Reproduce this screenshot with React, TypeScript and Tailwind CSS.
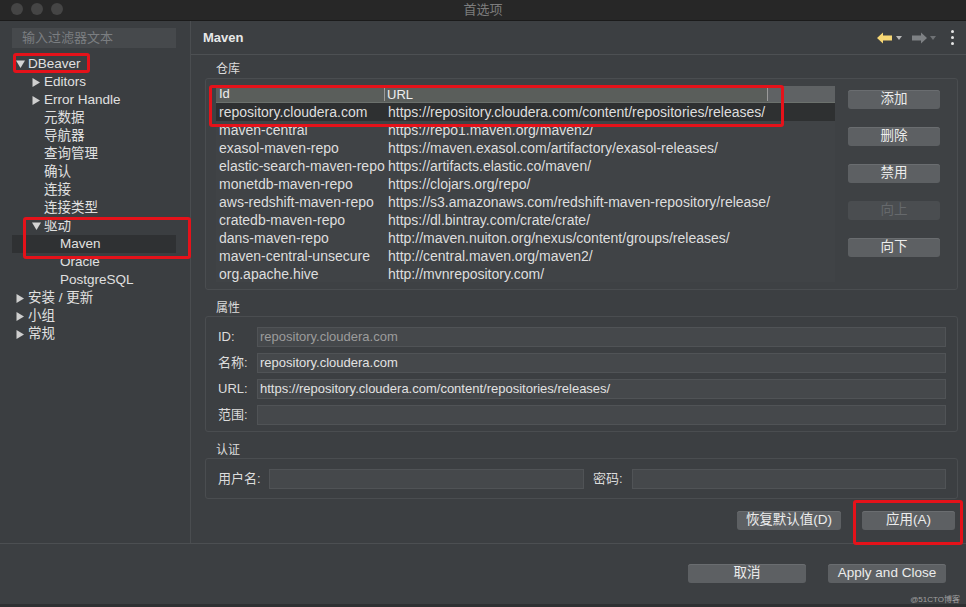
import React from "react";

type TreeNode = {
  label: string;
  level: number;
  arrow?: "open" | "closed";
  selected?: boolean;
};

const tree: TreeNode[] = [
  { label: "DBeaver", level: 0, arrow: "open" },
  { label: "Editors", level: 1, arrow: "closed" },
  { label: "Error Handle", level: 1, arrow: "closed" },
  { label: "元数据", level: 1 },
  { label: "导航器", level: 1 },
  { label: "查询管理", level: 1 },
  { label: "确认", level: 1 },
  { label: "连接", level: 1 },
  { label: "连接类型", level: 1 },
  { label: "驱动", level: 1, arrow: "open" },
  { label: "Maven", level: 2, selected: true },
  { label: "Oracle", level: 2 },
  { label: "PostgreSQL", level: 2 },
  { label: "安装 / 更新", level: 0, arrow: "closed" },
  { label: "小组", level: 0, arrow: "closed" },
  { label: "常规", level: 0, arrow: "closed" },
];

const repos: [string, string][] = [
  ["repository.cloudera.com", "https://repository.cloudera.com/content/repositories/releases/"],
  ["maven-central", "https://repo1.maven.org/maven2/"],
  ["exasol-maven-repo", "https://maven.exasol.com/artifactory/exasol-releases/"],
  ["elastic-search-maven-repo", "https://artifacts.elastic.co/maven/"],
  ["monetdb-maven-repo", "https://clojars.org/repo/"],
  ["aws-redshift-maven-repo", "https://s3.amazonaws.com/redshift-maven-repository/release/"],
  ["cratedb-maven-repo", "https://dl.bintray.com/crate/crate/"],
  ["dans-maven-repo", "http://maven.nuiton.org/nexus/content/groups/releases/"],
  ["maven-central-unsecure", "http://central.maven.org/maven2/"],
  ["org.apache.hive", "http://mvnrepository.com/"],
];

const sideButtons = [
  { label: "添加", disabled: false },
  { label: "删除", disabled: false },
  { label: "禁用", disabled: false },
  { label: "向上", disabled: true },
  { label: "向下", disabled: false },
];

function Arrow({ kind }: { kind?: "open" | "closed" }) {
  if (!kind) return <span className="inline-block w-[12px] shrink-0" />;
  return (
    <span className="inline-flex w-[12px] shrink-0 items-center">
      {kind === "open" ? (
        <svg width="9" height="8" viewBox="0 0 9 8">
          <path d="M0 0.5 H9 L4.5 8 Z" fill="#d4d4d4" />
        </svg>
      ) : (
        <svg width="8" height="9" viewBox="0 0 8 9">
          <path d="M0.5 0 V9 L8 4.5 Z" fill="#cfcfcf" />
        </svg>
      )}
    </span>
  );
}

function Field({ value, muted }: { value?: string; muted?: boolean }) {
  return (
    <div
      className={`flex h-[20px] flex-1 items-center border border-[#505356] bg-[#45484b] px-[2px] text-[13px] ${muted ? "text-[#9c9c9c]" : "text-[#e2e2e2]"}`}
    >
      {value}
    </div>
  );
}

function Btn({ label, className = "" }: { label: string; className?: string }) {
  return (
    <div
      className={`flex h-[19px] items-center justify-center rounded-[3px] bg-[#5d6063] text-[13.5px] text-[#ececec] shadow-[inset_0_1px_0_#6a6d70] ${className}`}
    >
      {label}
    </div>
  );
}

function RedBox({ className }: { className: string }) {
  return <div className={`pointer-events-none absolute rounded-[3px] border-[3px] border-[#e5121a] ${className}`} />;
}

export default function App() {
  return (
    <div className="relative flex h-[607px] w-[966px] flex-col overflow-hidden bg-[#3c3f42] font-['Liberation_Sans','Noto_Sans_CJK_SC',sans-serif] text-[#dedede]">
      {/* title bar */}
      <div className="relative flex h-[21px] shrink-0 items-center justify-center border-b border-[#1b1b1b] bg-[#272727]">
        <div className="absolute left-[11px] top-[3px] flex gap-[8px]">
          <span className="h-[12px] w-[12px] rounded-full bg-[#454545]" />
          <span className="h-[12px] w-[12px] rounded-full bg-[#454545]" />
          <span className="h-[12px] w-[12px] rounded-full bg-[#454545]" />
        </div>
        <span className="text-[13px] text-[#7d7d7d]">首选项</span>
      </div>

      <div className="flex h-[523px] shrink-0 border-b border-[#4c4f52]">
        {/* sidebar */}
        <aside className="flex w-[191px] shrink-0 flex-col border-r border-[#4a4d50] bg-[#3b3e41] pt-[7px]">
          <div className="mx-[12px] flex h-[20px] w-[164px] items-center bg-[#46494c] px-[10px] text-[13px] text-[#7b7e81]">
            输入过滤器文本
          </div>
          <div className="mx-[12px] mt-[7px] flex w-[164px] flex-col">
            {tree.map((node) => (
              <div
                key={node.label}
                className={`flex h-[18px] items-center text-[13.5px] ${node.selected ? "bg-[#2f3133]" : ""}`}
                style={{ paddingLeft: 4 + node.level * 16 }}
              >
                <Arrow kind={node.arrow} />
                <span className="whitespace-nowrap text-[#e0e0e0]">{node.label}</span>
              </div>
            ))}
          </div>
        </aside>

        {/* content */}
        <section className="flex flex-1 flex-col">
          <div className="flex h-[34px] shrink-0 items-center justify-between border-b border-[#4d5053] pl-[12px] pr-[12px]">
            <span className="text-[13px] font-bold text-[#e8e8e8]">Maven</span>
            <div className="flex items-center gap-[3px]">
              <svg width="16" height="12" viewBox="0 0 16 12">
                <path d="M0 6 L6 0.5 V3.5 H15 V8.5 H6 V11.5 Z" fill="#f7d774" />
              </svg>
              <svg width="6" height="4" viewBox="0 0 6 4" className="mr-[6px]">
                <path d="M0 0 H6 L3 4 Z" fill="#b8b8b8" />
              </svg>
              <svg width="16" height="12" viewBox="0 0 16 12">
                <path d="M16 6 L10 0.5 V3.5 H1 V8.5 H10 V11.5 Z" fill="#7e8184" />
              </svg>
              <svg width="6" height="4" viewBox="0 0 6 4" className="mr-[12px]">
                <path d="M0 0 H6 L3 4 Z" fill="#6f7275" />
              </svg>
              <div className="flex flex-col gap-[3px]">
                <span className="h-[3px] w-[3px] rounded-full bg-[#e6e6e6]" />
                <span className="h-[3px] w-[3px] rounded-full bg-[#e6e6e6]" />
                <span className="h-[3px] w-[3px] rounded-full bg-[#e6e6e6]" />
              </div>
            </div>
          </div>

          <div className="flex flex-1 flex-col pl-[14px] pr-[8px]">
            {/* 仓库 */}
            <div className="mt-[6px] flex h-[16px] items-center pl-[11px] text-[12px] text-[#dcdcdc]">仓库</div>
            <div className="mt-[1px] flex h-[212px] rounded-[3px] border border-[#4a4d50] bg-[#3e4144] pl-[10px] pt-[7px]">
              <div className="flex h-[196px] w-[619px] flex-col overflow-hidden bg-[#404346]">
                <div className="flex h-[17px] shrink-0 items-center border-b border-[#6c716d] bg-[#5a5e5b] text-[13px] text-[#eeeeee]">
                  <span className="w-[168px] pl-[3px]">Id</span>
                  <span className="w-[383px] border-l border-[#9a9a9a] pl-[2px] leading-[13px]">URL</span>
                  <span className="h-[13px] border-l border-[#9a9a9a]" />
                  <span className="h-full flex-1 bg-[#5f6264]" />
                </div>
                {repos.map(([id, url], i) => (
                  <div
                    key={id}
                    className={`flex h-[18px] shrink-0 items-center text-[14px] ${i === 0 ? "bg-[#2e3031]" : ""}`}
                  >
                    <span className="w-[169px] shrink-0 whitespace-nowrap pl-[3px]">{id}</span>
                    <span className="whitespace-nowrap pl-[3px]">{url}</span>
                  </div>
                ))}
              </div>
              <div className="ml-[13px] flex w-[92px] flex-col gap-[18px] pt-[4px]">
                {sideButtons.map((b) =>
                  b.disabled ? (
                    <div
                      key={b.label}
                      className="flex h-[19px] items-center justify-center rounded-[3px] bg-[#4a4d50] text-[13.5px] text-[#66696c]"
                    >
                      {b.label}
                    </div>
                  ) : (
                    <Btn key={b.label} label={b.label} />
                  )
                )}
              </div>
            </div>

            {/* 属性 */}
            <div className="mt-[10px] flex h-[16px] items-center pl-[11px] text-[12px] text-[#dcdcdc]">属性</div>
            <div className="flex h-[116px] flex-col gap-[6px] rounded-[3px] border border-[#4a4d50] pl-[12px] pr-[11px] pt-[10px]">
              {[
                { label: "ID:", value: "repository.cloudera.com", muted: true },
                { label: "名称:", value: "repository.cloudera.com" },
                { label: "URL:", value: "https://repository.cloudera.com/content/repositories/releases/" },
                { label: "范围:", value: "" },
              ].map((row) => (
                <div key={row.label} className="flex h-[20px] items-center">
                  <span className="w-[39px] text-[13px] text-[#dcdcdc]">{row.label}</span>
                  <Field value={row.value} muted={row.muted} />
                </div>
              ))}
            </div>

            {/* 认证 */}
            <div className="mt-[10px] flex h-[16px] items-center pl-[11px] text-[12px] text-[#dcdcdc]">认证</div>
            <div className="flex h-[41px] items-start rounded-[3px] border border-[#4a4d50] pl-[12px] pr-[11px] pt-[10px]">
              <div className="flex h-[20px] flex-1 items-center">
                <span className="w-[51px] text-[13px] text-[#dcdcdc]">用户名:</span>
                <div className="h-[20px] w-[315px] border border-[#505356] bg-[#45484b]" />
                <span className="ml-[9px] w-[39px] text-[13px] text-[#dcdcdc]">密码:</span>
                <Field />
              </div>
            </div>

            <div className="mt-[12px] flex justify-end gap-[21px] pr-[3px]">
              <Btn label="恢复默认值(D)" className="w-[104px]" />
              <Btn label="应用(A)" className="w-[93px]" />
            </div>
          </div>
        </section>
      </div>

      {/* bottom bar */}
      <div className="flex flex-1 items-start justify-end gap-[22px] border-b-[3px] border-[#2e3032] pr-[20px] pt-[20px]">
        <Btn label="取消" className="w-[118px]" />
        <Btn label="Apply and Close" className="w-[118px]" />
      </div>
      <span className="absolute bottom-[3px] right-[6px] text-[8px] leading-[8px] text-[#a0a0a0]">@51CTO博客</span>

      {/* annotations */}
      <RedBox className="left-[13px] top-[53px] h-[20px] w-[77px]" />
      <RedBox className="left-[23px] top-[217px] h-[42px] w-[168px]" />
      <RedBox className="left-[209px] top-[85px] h-[42px] w-[575px]" />
      <RedBox className="left-[853px] top-[500px] h-[45px] w-[110px]" />
    </div>
  );
}
